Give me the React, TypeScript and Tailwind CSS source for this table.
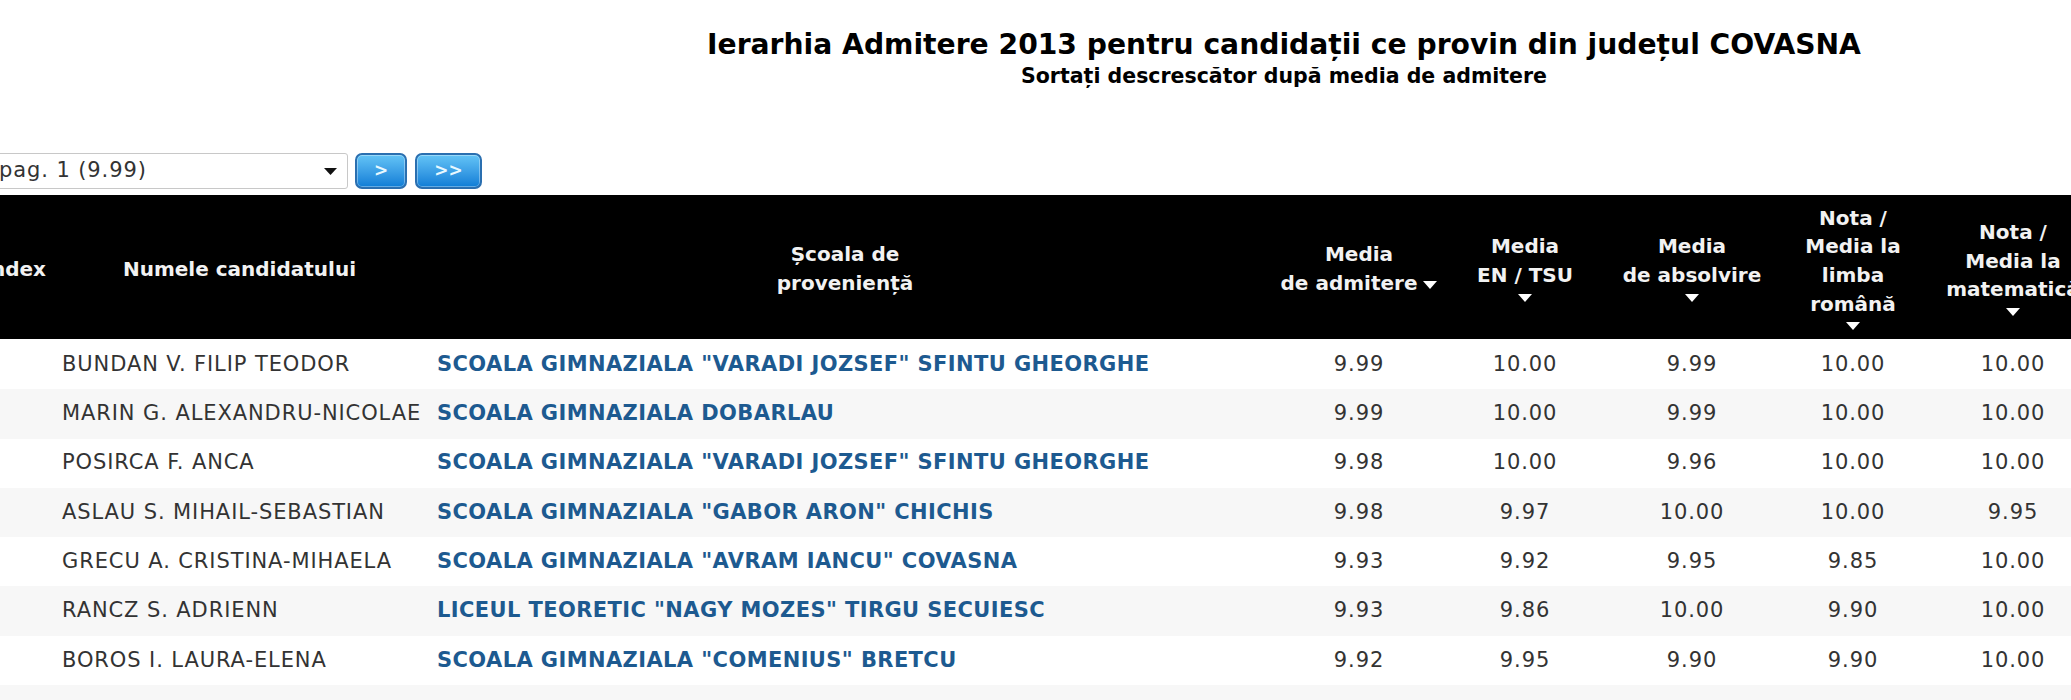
import React from "react";

const rows: [string, string, string, string, string, string, string][] = [
  ["BUNDAN V. FILIP TEODOR", 'SCOALA GIMNAZIALA "VARADI JOZSEF" SFINTU GHEORGHE', "9.99", "10.00", "9.99", "10.00", "10.00"],
  ["MARIN G. ALEXANDRU-NICOLAE", "SCOALA GIMNAZIALA DOBARLAU", "9.99", "10.00", "9.99", "10.00", "10.00"],
  ["POSIRCA F. ANCA", 'SCOALA GIMNAZIALA "VARADI JOZSEF" SFINTU GHEORGHE', "9.98", "10.00", "9.96", "10.00", "10.00"],
  ["ASLAU S. MIHAIL-SEBASTIAN", 'SCOALA GIMNAZIALA "GABOR ARON" CHICHIS', "9.98", "9.97", "10.00", "10.00", "9.95"],
  ["GRECU A. CRISTINA-MIHAELA", 'SCOALA GIMNAZIALA "AVRAM IANCU" COVASNA', "9.93", "9.92", "9.95", "9.85", "10.00"],
  ["RANCZ S. ADRIENN", 'LICEUL TEORETIC "NAGY MOZES" TIRGU SECUIESC', "9.93", "9.86", "10.00", "9.90", "10.00"],
  ["BOROS I. LAURA-ELENA", 'SCOALA GIMNAZIALA "COMENIUS" BRETCU', "9.92", "9.95", "9.90", "9.90", "10.00"],
  ["", "", "", "", "", "", ""],
];

const gridCols = "grid grid-cols-[92px_375px_836px_192px_140px_194px_128px_192px]";

function SortArrow({ inline = false }: { inline?: boolean }) {
  return (
    <svg
      width="14"
      height="8"
      viewBox="0 0 14 8"
      className={inline ? "inline-block align-middle ml-[6px]" : "block mx-auto"}
    >
      <polygon points="0,0 14,0 7,8" fill="#ffffff" />
    </svg>
  );
}

export default function App() {
  return (
    <div className="w-[2071px] h-[700px] overflow-hidden bg-white font-['DejaVu_Sans',Verdana,sans-serif]">
      {/* Title */}
      <div className="w-[2568px] text-center pt-[29px] text-black">
        <div className="text-[28.2px] font-bold leading-[32px]">
          Ierarhia Admitere 2013 pentru candidații ce provin din județul COVASNA
        </div>
        <div className="text-[20.5px] font-bold leading-[24px] mt-[3px]">
          Sortați descrescător după media de admitere
        </div>
      </div>

      {/* Pager controls */}
      <div className="mt-[65px] flex items-center h-[36px]">
        <div className="-ml-[8px] w-[356px] h-[36px] border border-[#c8c8c8] rounded-[3px] bg-white flex items-center justify-between pl-[6px] pr-[10px] text-[21px] tracking-[0.9px] text-[#333]">
          <span className="whitespace-nowrap">pag. 1 (9.99)</span>
          <svg width="13" height="7" viewBox="0 0 13 7">
            <polygon points="0,0 13,0 6.5,7" fill="#111" />
          </svg>
        </div>
        <button className="ml-[7px] w-[52px] h-[36px] rounded-[7px] border-2 border-[#2a6fb0] bg-linear-to-b from-[#63c4f6] to-[#0b7dd6] text-[#e8f8ff] font-bold text-[17px] flex items-center justify-center shadow-[inset_0_0_0_1px_rgba(255,255,255,0.35)]">
          &gt;
        </button>
        <button className="ml-[8px] w-[67px] h-[36px] rounded-[7px] border-2 border-[#2a6fb0] bg-linear-to-b from-[#63c4f6] to-[#0b7dd6] text-[#e8f8ff] font-bold text-[17px] flex items-center justify-center shadow-[inset_0_0_0_1px_rgba(255,255,255,0.35)]">
          &gt;&gt;
        </button>
      </div>

      {/* Table */}
      <div className="-ml-[40px] w-[2149px] mt-[6px]">
        <div className={`${gridCols} h-[144px] pt-[4px] bg-black text-[#f2f2f2] font-bold text-[20px] leading-[28.7px] items-center text-center`}>
          <div className="text-right pr-[6px]">Index</div>
          <div className="whitespace-nowrap">Numele candidatului</div>
          <div>
            Școala de
            <br />
            proveniență
          </div>
          <div className="whitespace-nowrap">
            Media
            <br />
            de admitere
            <SortArrow inline />
          </div>
          <div className="whitespace-nowrap">
            Media
            <br />
            EN / TSU
            <div className="h-[16px] flex items-center justify-center">
              <SortArrow />
            </div>
          </div>
          <div className="whitespace-nowrap">
            Media
            <br />
            de absolvire
            <div className="h-[16px] flex items-center justify-center">
              <SortArrow />
            </div>
          </div>
          <div className="whitespace-nowrap">
            Nota /
            <br />
            Media la
            <br />
            limba
            <br />
            română
            <div className="h-[16px] flex items-center justify-center">
              <SortArrow />
            </div>
          </div>
          <div className="whitespace-nowrap">
            Nota /
            <br />
            Media la
            <br />
            matematică
            <div className="h-[16px] flex items-center justify-center">
              <SortArrow />
            </div>
          </div>
        </div>

        <div className="pt-[1px]">
          {rows.map((r, i) => (
            <div
              key={i}
              className={`${gridCols} h-[49.3px] items-center text-[21px] text-[#333] whitespace-nowrap ${
                i % 2 === 1 ? "bg-[#f7f7f7]" : "bg-white"
              }`}
            >
              <div></div>
              <div className="pl-[10px] tracking-[0.9px]">{r[0]}</div>
              <div className="pl-[10px] font-bold tracking-[0.4px] text-[#1d5a90]">{r[1]}</div>
              <div className="text-center tracking-[0.9px]">{r[2]}</div>
              <div className="text-center tracking-[0.9px]">{r[3]}</div>
              <div className="text-center tracking-[0.9px]">{r[4]}</div>
              <div className="text-center tracking-[0.9px]">{r[5]}</div>
              <div className="text-center tracking-[0.9px]">{r[6]}</div>
            </div>
          ))}
        </div>
      </div>
    </div>
  );
}
